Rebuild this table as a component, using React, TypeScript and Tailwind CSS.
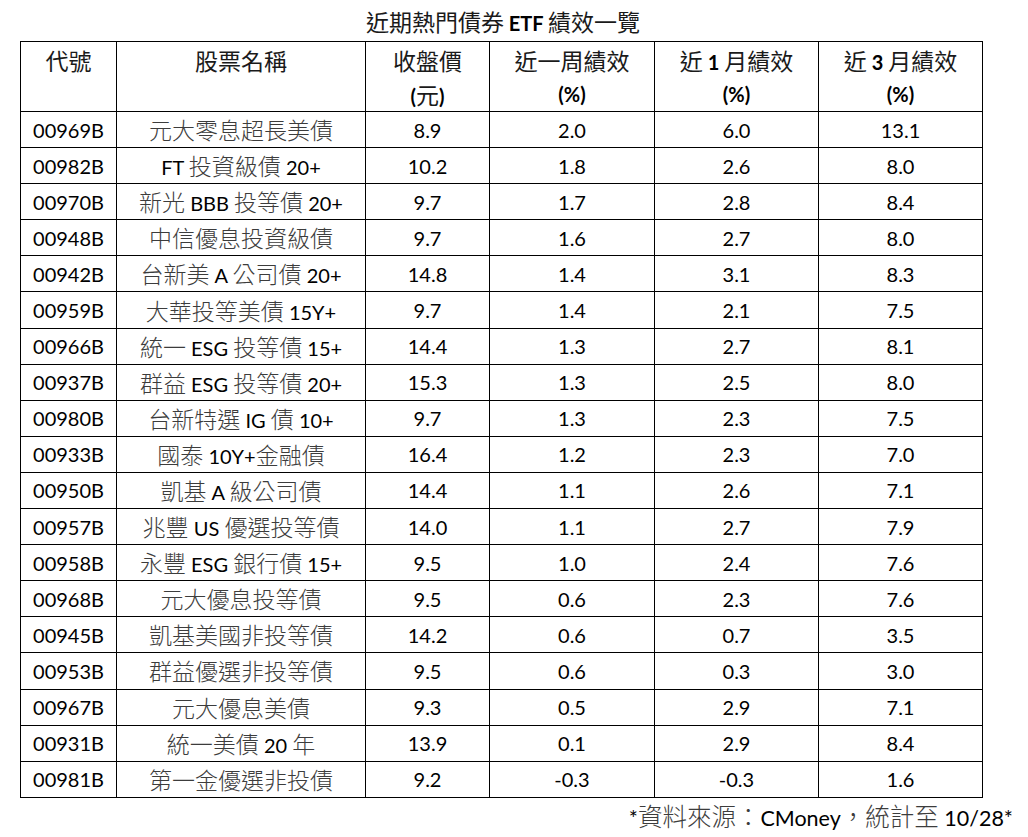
import React from "react";

const rows: [string, string, string, string, string, string][] = [
  ["00969B", "元大零息超長美債", "8.9", "2.0", "6.0", "13.1"],
  ["00982B", "FT 投資級債 20+", "10.2", "1.8", "2.6", "8.0"],
  ["00970B", "新光 BBB 投等債 20+", "9.7", "1.7", "2.8", "8.4"],
  ["00948B", "中信優息投資級債", "9.7", "1.6", "2.7", "8.0"],
  ["00942B", "台新美 A 公司債 20+", "14.8", "1.4", "3.1", "8.3"],
  ["00959B", "大華投等美債 15Y+", "9.7", "1.4", "2.1", "7.5"],
  ["00966B", "統一 ESG 投等債 15+", "14.4", "1.3", "2.7", "8.1"],
  ["00937B", "群益 ESG 投等債 20+", "15.3", "1.3", "2.5", "8.0"],
  ["00980B", "台新特選 IG 債 10+", "9.7", "1.3", "2.3", "7.5"],
  ["00933B", "國泰 10Y+金融債", "16.4", "1.2", "2.3", "7.0"],
  ["00950B", "凱基 A 級公司債", "14.4", "1.1", "2.6", "7.1"],
  ["00957B", "兆豐 US 優選投等債", "14.0", "1.1", "2.7", "7.9"],
  ["00958B", "永豐 ESG 銀行債 15+", "9.5", "1.0", "2.4", "7.6"],
  ["00968B", "元大優息投等債", "9.5", "0.6", "2.3", "7.6"],
  ["00945B", "凱基美國非投等債", "14.2", "0.6", "0.7", "3.5"],
  ["00953B", "群益優選非投等債", "9.5", "0.6", "0.3", "3.0"],
  ["00967B", "元大優息美債", "9.3", "0.5", "2.9", "7.1"],
  ["00931B", "統一美債 20 年", "13.9", "0.1", "2.9", "8.4"],
  ["00981B", "第一金優選非投債", "9.2", "-0.3", "-0.3", "1.6"],
];

const CJK = /([\u3000-\u9fff\uff00-\uffef]+)/;

function Mixed({
  text,
  bold = false,
  cjkDark = false,
  big = false,
}: {
  text: string;
  bold?: boolean;
  cjkDark?: boolean;
  big?: boolean;
}) {
  const parts = text.split(CJK).filter((p) => p.length > 0);
  const cjkSize = big ? "text-[24.5px]" : "text-[23px]";
  const latSize = big ? "text-[21.5px]" : "text-[20px]";
  return (
    <span className="leading-none whitespace-pre">
      {parts.map((p, i) =>
        CJK.test(p) ? (
          <span
            key={i}
            className={
              (cjkDark
                ? "font-['Noto_Sans_CJK_TC',sans-serif] font-normal leading-none text-[#1a1a1a] "
                : "font-['Noto_Sans_CJK_TC',sans-serif] font-light leading-none text-[#3c3c3c] ") + cjkSize
            }
          >
            {p}
          </span>
        ) : (
          <span
            key={i}
            className={
              (bold
                ? "font-['Lato','Noto_Sans_CJK_TC',sans-serif] font-bold leading-none text-black "
                : "font-['Lato','Noto_Sans_CJK_TC',sans-serif] font-normal leading-none text-black ") + latSize
            }
          >
            {p}
          </span>
        )
      )}
    </span>
  );
}

const headers: [string, string][] = [
  ["代號", ""],
  ["股票名稱", ""],
  ["收盤價", "(元)"],
  ["近一周績效", "(%)"],
  ["近 1 月績效", "(%)"],
  ["近 3 月績效", "(%)"],
];

const widths = ["w-[96px]", "w-[249px]", "w-[124px]", "w-[165px]", "w-[164px]", "w-[164px]"];

export default function App() {
  return (
    <div className="w-[1028px] h-[837px] bg-white font-['Lato','Noto_Sans_CJK_TC',sans-serif]">
      <div className="h-[41px] flex items-center justify-center pr-[22px] pt-[2px]">
        <Mixed text="近期熱門債券 ETF 績效一覽" bold cjkDark />
      </div>
      <table className="ml-[20px] w-[963px] border-collapse table-fixed">
        <colgroup>
          {widths.map((w, i) => (
            <col key={i} className={w} />
          ))}
        </colgroup>
        <thead>
          <tr>
            {headers.map(([a, b], i) => (
              <th key={i} className="border border-black align-top p-0 text-center font-normal">
                <div className="h-[35px] flex items-center justify-center pt-[2px]">
                  <Mixed text={a} bold cjkDark />
                </div>
                <div className="h-[34px] flex items-center justify-center">
                  {b ? <Mixed text={b} bold cjkDark /> : null}
                </div>
              </th>
            ))}
          </tr>
        </thead>
        <tbody>
          {rows.map((r, ri) => (
            <tr key={ri}>
              {r.map((c, ci) => (
                <td key={ci} className="border border-black p-0 text-center align-middle">
                  <div className="h-[35.1px] flex items-center justify-center">
                    <Mixed text={c} />
                  </div>
                </td>
              ))}
            </tr>
          ))}
        </tbody>
      </table>
      <div className="h-[40px] flex items-center justify-end pr-[15px] pb-[2px]">
        <Mixed text="*資料來源：CMoney，統計至 10/28*" big />
      </div>
    </div>
  );
}
